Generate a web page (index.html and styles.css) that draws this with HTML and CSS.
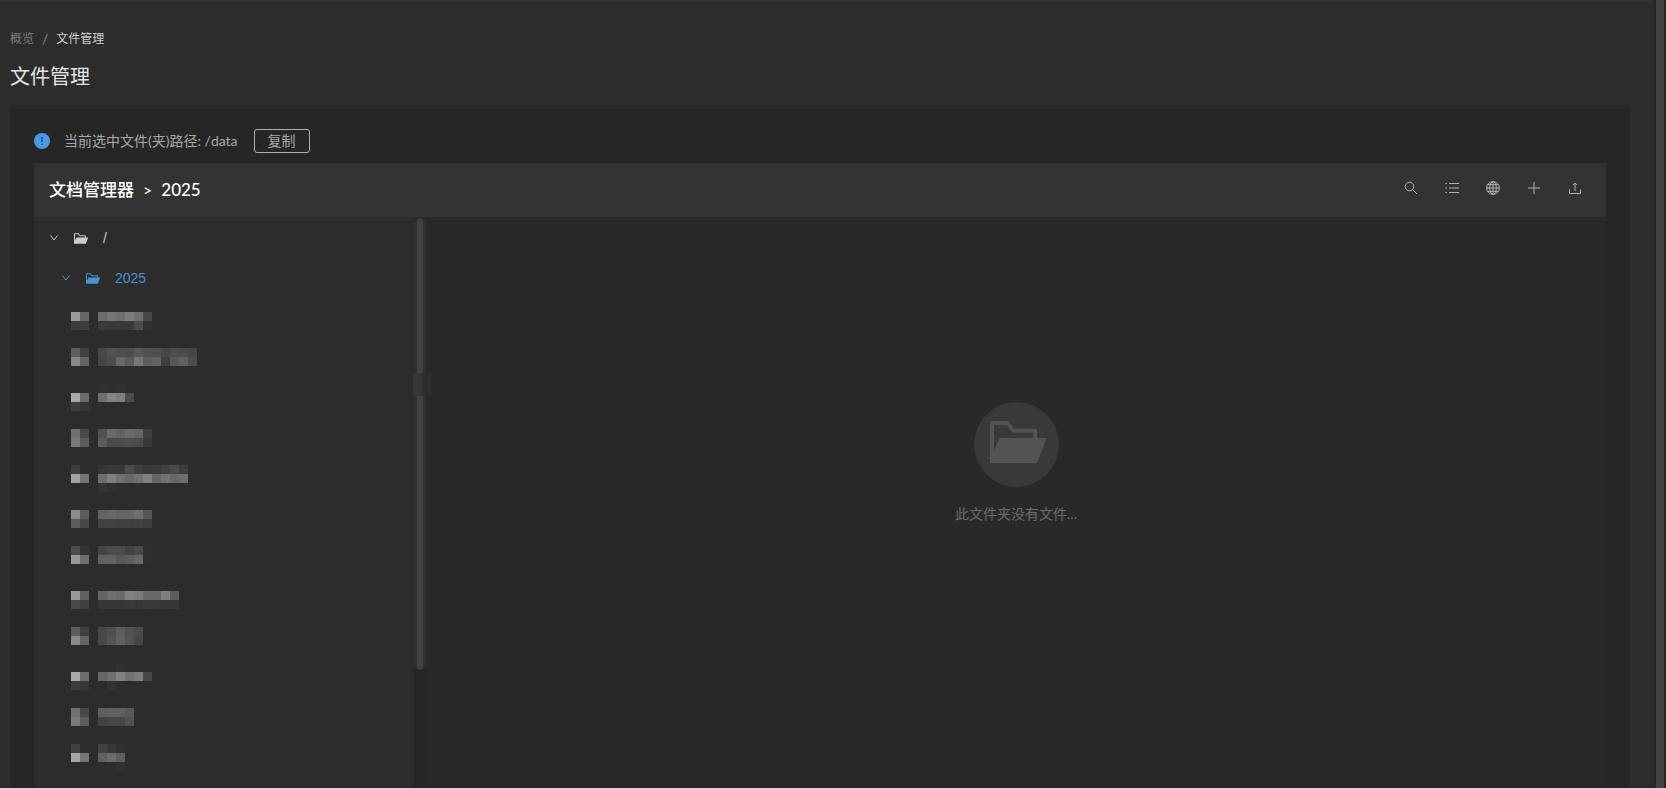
FILE: index.html
```html
<!DOCTYPE html>
<html lang="zh">
<head>
    <meta charset="UTF-8">
    <meta name="viewport" content="width=device-width, initial-scale=1.0">
    <title>文件管理</title>
    <link rel="stylesheet" href="styles.css">
</head>
<body>
<svg class="symbols" aria-hidden="true">
    <symbol id="folder" viewBox="0 0 56 42">
        <path fill-rule="evenodd" d="M1 0H18.5L24.5 7.7H46Q47 7.7 47 8.7V17H55Q56.500 17 56 18.500L47.700 40.500Q47.300 42 46 42H1Q0 42 0 41V1Q0 0 1 0ZM4 4.300V29.700L8.800 18Q9.300 17 10.300 17H43.300V11.700H22.700L16.700 4.300Z"/>
    </symbol>
    <symbol id="arrow" viewBox="0 0 8 6">
        <path d="M0.500 0.500L4 5L7.500 0.500" fill="none" stroke="currentColor"/>
    </symbol>
</svg>

<main class="page">
    <nav class="breadcrumb">
        <a href="#">概览</a>
        <span class="separator">/</span>
        <a href="#" class="current">文件管理</a>
    </nav>
    <h1 class="title">文件管理</h1>

    <section class="card">
        <div class="path-bar">
            <svg class="info-icon" viewBox="0 0 16 16">
                <circle cx="8" cy="8" r="8" fill="#4a98e8"/>
                <path d="M8 4V9M8 10.500V12" stroke="#2a5f96" stroke-width="2"/>
            </svg>
            <span class="path-text">当前选中文件(夹)路径: /data</span>
            <button type="button" class="copy-btn">复制</button>
        </div>

        <div class="manager">
            <header class="toolbar">
                <div class="location">
                    <span>文档管理器</span>
                    <span class="arrow">&gt;</span>
                    <span>2025</span>
                </div>
                <div class="tools">
                    <button type="button" aria-label="搜索">
                        <svg viewBox="0 0 14 14"><circle cx="5.500" cy="5.500" r="4.300"/><path d="M8.700 8.700L13 13"/></svg>
                    </button>
                    <button type="button" aria-label="列表">
                        <svg viewBox="0 0 14 14"><path d="M4 2.500H14M4 7H14M4 11.500H14M0.500 2.500H2M0.500 7H2M0.500 11.500H2"/></svg>
                    </button>
                    <button type="button" aria-label="语言">
                        <svg viewBox="0 0 14 14"><circle cx="7" cy="7" r="6.400"/><ellipse cx="7" cy="7" rx="3.300" ry="6.400"/><path d="M7 0.500V13.500M0.500 7H13.500M1.500 3.700H12.500M1.500 10.300H12.500"/></svg>
                    </button>
                    <button type="button" aria-label="新建">
                        <svg viewBox="0 0 14 14"><path d="M7 1V13M1 7H13"/></svg>
                    </button>
                    <button type="button" aria-label="上传">
                        <svg viewBox="0 0 14 14"><path d="M7 10V2.500M5 4L7 2L9 4M1.500 8.500V12.500H12.500V8.500"/></svg>
                    </button>
                </div>
            </header>

            <div class="content">
                <aside class="sidebar">
                    <ul class="tree" id="tree">
                        <li class="node">
                            <svg class="node-arrow"><use href="#arrow"/></svg>
                            <svg class="node-folder"><use href="#folder"/></svg>
                            <span>/</span>
                        </li>
                        <li class="node child active">
                            <svg class="node-arrow"><use href="#arrow"/></svg>
                            <svg class="node-folder"><use href="#folder"/></svg>
                            <span>2025</span>
                        </li>
                    </ul>
                    <div class="scroll-track">
                        <div class="scroll-thumb"></div>
                        <div class="drag-handle"></div>
                    </div>
                </aside>
                <div class="empty">
                    <div class="empty-icon">
                        <svg><use href="#folder"/></svg>
                    </div>
                    <p>此文件夹没有文件...</p>
                </div>
            </div>
        </div>
    </section>
</main>
<div class="page-scroll"></div>

<script src="tree.js"></script>
</body>
</html>
```
FILE: styles.css
```css
body {
    display: flex;
    min-height: 100vh;
    margin: 0;
    background-color: #2c2c2c;
    color: #ddd;
    font-family: Lato, "Noto Sans CJK SC", sans-serif;
    font-size: 14px;
}
* {
    box-sizing: border-box;
}
button {
    font-family: inherit;
    background: none;
    cursor: pointer;
}
.symbols {
    position: absolute;
    width: 0;
    height: 0;
}
.page {
    flex: 1;
    display: flex;
    flex-direction: column;
    padding: 27px 24px 0 10px;
    border-top: 2px solid #333;
    border-bottom: 2px solid #282828;
}
.breadcrumb {
    display: flex;
    gap: 8px;
    font-size: 12px;
    line-height: 20px;
}
.breadcrumb a {
    color: #7c7c7c;
    text-decoration: none;
}
.breadcrumb .current {
    color: #d0d0d0;
}
.separator {
    font-size: 14px;
    color: #8c8c8c;
}
.title {
    margin: 13px 0 15px;
    font-size: 20px;
    font-weight: 400;
    line-height: 28px;
    color: #e4e4e4;
}
.card {
    flex: 1;
    display: flex;
    flex-direction: column;
    padding: 24px 24px 0;
    border-radius: 2px;
    background-color: #262626;
}
.path-bar {
    display: flex;
    align-items: center;
    margin-bottom: 10px;
    line-height: 24px;
    color: #a8a8a8;
}
.info-icon {
    width: 16px;
    height: 16px;
    margin-right: 14px;
}
.copy-btn {
    width: 56px;
    height: 24px;
    margin-left: 16px;
    padding: 0;
    border: 1px solid #b0b0b0;
    border-radius: 3px;
    font-size: 14px;
    line-height: 22px;
    color: #a8a8a8;
}
.manager {
    flex: 1;
    display: flex;
    flex-direction: column;
}
.toolbar {
    display: flex;
    align-items: center;
    justify-content: space-between;
    height: 54px;
    padding: 0 24px 0 15px;
    background-color: #333;
}
.location {
    display: flex;
    align-items: center;
    gap: 9px;
    font-size: 17px;
    line-height: 24px;
    font-weight: 500;
    color: #fff;
}
.location .arrow {
    font-size: 16px;
}
.tools {
    display: flex;
    gap: 27px;
    padding-bottom: 4px;
}
.tools button {
    display: flex;
    padding: 0;
    border: none;
}
.tools svg {
    width: 14px;
    height: 14px;
    fill: none;
    stroke: #b4b4b4;
}
.content {
    flex: 1;
    display: flex;
}
.sidebar {
    display: flex;
    width: 392px;
    padding-top: 1px;
    background-color: #2c2c2c;
}
.tree {
    flex: 1;
    margin: 0;
    padding: 0;
    list-style: none;
    font-family: "Liberation Sans", "Noto Sans CJK SC", sans-serif;
}
.node {
    display: flex;
    align-items: center;
    height: 40px;
    padding-left: 16px;
    color: #ccc;
}
.node.child {
    padding-left: 28px;
}
.node.active {
    color: #4a90d9;
}
.node.masked {
    padding-left: 37px;
}
.node-arrow {
    width: 8px;
    height: 6px;
    margin-right: 16px;
}
.node-folder {
    width: 14px;
    height: 11px;
    margin-right: 15px;
    fill: currentColor;
}
.scroll-track {
    position: relative;
    width: 12px;
    background-color: #262626;
}
.scroll-thumb {
    height: 452px;
    border-radius: 6px;
    border: 3px solid #303030;
    border-width: 0 3px;
    background-color: #424242;
}
.drag-handle {
    position: absolute;
    top: 155px;
    left: -1px;
    width: 18px;
    height: 23px;
    background: linear-gradient(to right, #363636 50%, #2e2e2e 50%);
}
.empty {
    flex: 1;
    display: flex;
    flex-direction: column;
    align-items: center;
    padding-top: 185px;
    background-color: #292929;
    color: #6c6c6c;
}
.empty-icon {
    display: flex;
    justify-content: center;
    width: 85px;
    height: 85px;
    padding: 19px 0 0 3px;
    border-radius: 50%;
    background-color: #393939;
}
.empty-icon svg {
    width: 56px;
    height: 42px;
    fill: #535353;
}
.empty p {
    margin: 16px 0 0;
    line-height: 22px;
}
.page-scroll {
    width: 12px;
    border: solid #262626;
    border-width: 0 2px;
    background-color: #424242;
}
```
FILE: tree.js
```js
const CELL = 9;

// top offset in the row, then lines of [icon greys, name greys]
const maskedRows = [
    [14, ['9a 66', '6c 76 70 7c 70 48'], ['3c 3e', '3a 3a 3a 3a 4c 30']],
    [10, ['5e 40', '48 52 4c 4c 58 52 4e 48 4c 4a 46'], ['88 64', '46 4c 68 5a 76 5e 62 3e 58 60 4c']],
    [6, ['', '30 2e 32'], ['a8 6c', '6e 84 7e 4c'], ['3e 36', '']],
    [11, ['70 48', '50 6a 62 6a 64 40'], ['7a 5c', '5c 4a 4c 4e 4a 38']],
    [7, ['3e 2e', '34 38 38 4c 3e 38 3a 40 4a 3c'], ['a4 74', '6e 80 70 68 70 80 66 72 66 6e'], ['', '34 30']],
    [12, ['8c 5c', '62 68 64 66 70 56'], ['5c 48', '42 42 40 40 42 3c']],
    [8, ['4c 34', '44 4c 4c 42 4a 30'], ['98 6e', '60 62 58 5e 66 30']],
    [13, ['98 62', '64 6e 6a 82 7a 68 68 7e 5c'], ['4a 40', '36 36 36 38 36 3a 38 36 36']],
    [9, ['5c 40', '48 4e 5e 50 4c'], ['88 64', '48 54 62 54 46']],
    [5, ['', '2c 2c 30'], ['a8 6c', '66 70 82 72 7c 48'], ['3c 36', '2c 32']],
    [10, ['70 48', '5e 60 60 58'], ['7a 5c', '42 46 46 50']],
    [6, ['40 2e', '42 38 30'], ['a4 74', '60 6c 5e'], ['', '2c 2c 30']]
];

function cells(greys, left, top) {
    if (!greys) {
        return '';
    }
    return greys.split(' ').map(function (g, i) {
        return `<rect x="${left + i * CELL}" y="${top}" width="${CELL}" height="${CELL}" fill="#${g}${g}${g}"/>`;
    }).join('');
}

const tree = document.getElementById('tree');
maskedRows.forEach(function ([top, ...lines]) {
    const rects = lines.map(function ([icon, name], i) {
        const y = top + i * CELL;
        return cells(icon, 0, y) + cells(name, 27, y);
    }).join('');
    tree.insertAdjacentHTML('beforeend',
        `<li class="node masked"><svg width="130" height="40" shape-rendering="crispEdges">${rects}</svg></li>`);
});
```
